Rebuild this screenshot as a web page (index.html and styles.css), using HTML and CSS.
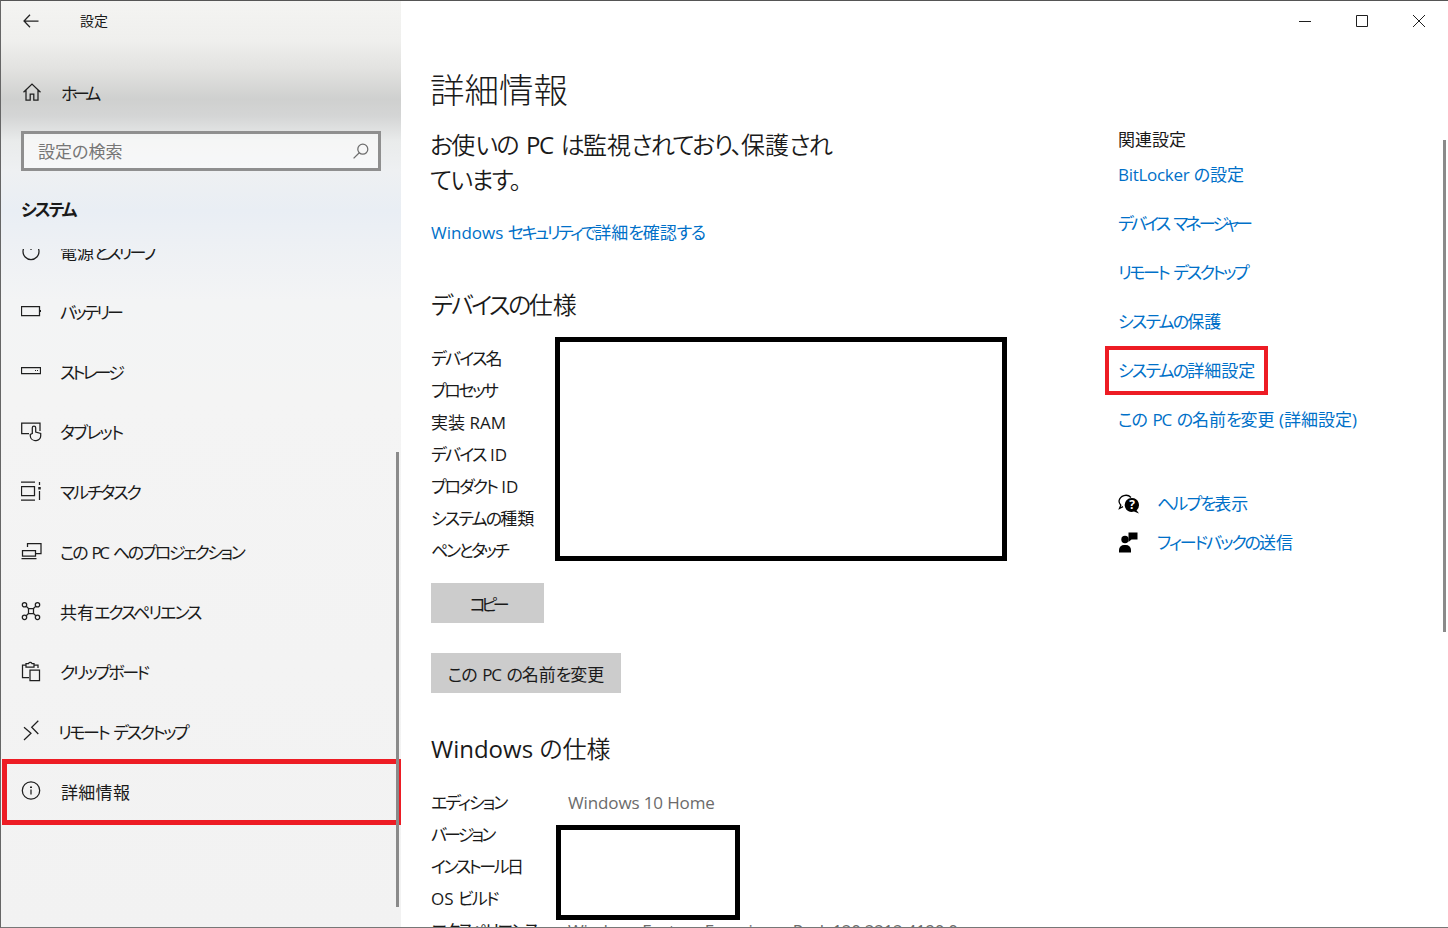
FILE: index.html
```html
<!DOCTYPE html>
<html lang="ja">
<head>
<meta charset="utf-8">
<title>設定</title>
<link rel="stylesheet" href="styles.css">
</head>
<body>
<div class="window">
  <aside class="sidebar">
    <div class="titlebar">
      <svg class="back" width="16" height="14" viewBox="0 0 16 14"><path d="M15.500 7H1M7 .8 1 7l6 6.200"/></svg>
      <span class="apptitle">設定</span>
    </div>
    <div class="home">
      <svg class="ico" width="20" height="20" viewBox="0 0 20 20"><path d="M1.500 10.200 10 2l8.500 8.200M4 8v10h4.200v-6h3.600v6H16V8"/></svg>
      <span class="k4">ホーム</span>
    </div>
    <div class="search"><span class="hint">設定の検索</span>
      <svg class="ico" width="16" height="16" viewBox="0 0 16 16"><circle cx="9.800" cy="6.200" r="5"/><path d="M6.300 9.700.6 15.400"/></svg>
    </div>
    <div class="group k2">システム</div>
    <nav class="nav">
      <div class="item"><svg class="ico" width="20" height="20" viewBox="0 0 20 20"><path d="M5 4.300a8 8 0 1 0 10 0M10 1v8"/></svg><span>電源<span class="k5">とスリープ</span></span></div>
      <div class="item"><svg class="ico" width="20" height="20" viewBox="0 0 20 20"><path d="M.5 5.500h18v9H.5zM19.500 9v2"/></svg><span class="k5">バッテリー</span></div>
      <div class="item"><svg class="ico" width="20" height="20" viewBox="0 0 20 20"><path d="M.5 6.500h19v6H.5z"/><path class="dots" d="M14 9.500h1M16 9.500h1"/></svg><span class="k5">ストレージ</span></div>
      <div class="item"><svg class="ico" width="22" height="22" viewBox="0 0 22 22"><path d="M8 13.500H.7V3.200H19V11"/><path d="M11.300 14V7.800a1.700 1.700 0 0 1 3.400 0V12l5 1.500V16a4.500 4.500 0 0 1-4.500 4.500H14A4.800 4.800 0 0 1 9.300 16v-1.500l2-1"/></svg><span class="k1">タブレット</span></div>
      <div class="item"><svg class="ico" width="22" height="20" viewBox="0 0 22 20"><path d="M0 1h14M0 19h14M.5 5.500h13v9H.5zM18.500 1v3M18.500 10v9"/><path class="dot" d="M18.500 6v2.500"/></svg><span class="k2">マルチタスク</span></div>
      <div class="item"><svg class="ico" width="21" height="18" viewBox="0 0 21 18"><path d="M6.500 5V1.500h13.500v10h-5M1.500 8.500h13V14h-13zM.500 16.500h15"/></svg><span class="k3">この PC へのプロジェクション</span></div>
      <div class="item"><svg class="ico" width="20" height="20" viewBox="0 0 20 20"><circle cx="3.500" cy="3.700" r="2.200"/><circle cx="16.500" cy="3.700" r="2.200"/><circle cx="3.500" cy="16.300" r="2.200"/><circle cx="16.500" cy="16.300" r="2.200"/><path d="M7.500 7.500h5v5h-5zM5.200 5.300l2.300 2.200M14.800 5.300l-2.300 2.200M5.200 14.700l2.300-2.200M14.800 14.700l-2.300-2.200"/></svg><span>共有<span class="k2">エクスペリエンス</span></span></div>
      <div class="item"><svg class="ico" width="20" height="22" viewBox="0 0 20 22"><path d="M8 17.500H1.500V5H5M13 5h4v3"/><path d="M5 7V3.500h2.500a2 2 0 0 1 3.500 0H13V7z"/><path d="M9 10h9.500v10.500H9z"/></svg><span class="k3">クリップボード</span></div>
      <div class="item"><svg class="ico" width="20" height="22" viewBox="0 0 20 22"><path d="M3 7.300 10 13.300 3 20M17.300.7 10.700 7.300 17.300 14"/></svg><span class="tight k3">リモート デスクトップ</span></div>
      <div class="item"><svg class="ico" width="20" height="20" viewBox="0 0 20 20"><circle cx="10" cy="9.500" r="8.700"/><path d="M10 8.500v5"/><path class="fat" d="M10 5.500v1.400"/></svg><span class="kj">詳細情報</span></div>
    </nav>
  </aside>

  <main class="main">
    <div class="caption">
      <svg width="14" height="14" viewBox="0 0 14 14"><path d="M1 7.500h12"/></svg>
      <svg width="14" height="14" viewBox="0 0 14 14"><path d="M1.500 1.500h11v11h-11z"/></svg>
      <svg width="14" height="14" viewBox="0 0 14 14"><path d="M1 1l12 12M13 1 1 13"/></svg>
    </div>
    <div class="columns">
      <section class="info">
        <h1>詳細情報</h1>
        <p class="status"><span class="hi">お</span>使<span class="hi">いの <span class="wl pc">PC</span> は</span>監視<span class="hi">されており、</span>保護<span class="hi">され</span><br><span class="hi">ています。</span></p>
        <a class="link seclink">Windows <span class="k3">セキュリティで</span>詳細<span class="hi">を</span>確認<span class="hi">する</span></a>
        <h2><span class="k1">デバイスの</span>仕様</h2>
        <dl class="specs">
          <dt><span class="k1">デバイス</span>名</dt>
          <dt class="k3">プロセッサ</dt>
          <dt>実装 RAM</dt>
          <dt><span class="k1">デバイス</span> ID</dt>
          <dt><span class="k2">プロダクト</span> ID</dt>
          <dt><span class="k1">システムの</span>種類</dt>
          <dt class="k3">ペンとタッチ</dt>
        </dl>
        <button class="btn copy"><span class="k6">コピー</span></button>
        <button class="btn rename"><span class="hi">この PC の</span>名前<span class="hi">を</span>変更</button>
        <h2 class="winhead"><span class="wl">Windows</span> の仕様</h2>
        <dl class="specs winspecs">
          <div class="row"><dt class="k2">エディション</dt><dd>Windows 10 Home</dd></div>
          <div class="row"><dt class="k5">バージョン</dt></div>
          <div class="row"><dt><span class="k3">インストール</span>日</dt></div>
          <div class="row"><dt>OS <span class="k1">ビルド</span></dt></div>
          <div class="row"><dt class="k2">エクスペリエンス</dt><dd class="packed">Windows Feature Experience Pack 120.2212.4190.0</dd></div>
        </dl>
      </section>
      <section class="related">
        <h3>関連設定</h3>
        <a class="link"><span class="latin">BitLocker</span> の設定</a>
        <a class="link k5">デバイス マネージャー</a>
        <a class="link k3">リモート デスクトップ</a>
        <a class="link"><span class="k1">システムの</span>保護</a>
        <a class="link"><span class="k1">システムの</span>詳細設定</a>
        <a class="link"><span class="hi">この PC の</span>名前<span class="hi">を</span>変更 (詳細設定)</a>
        <div class="help first">
          <svg width="22" height="20" viewBox="0 0 22 20"><path class="line" d="M13 3.500A7 7 0 0 0 1 7c0 1.700.7 3 1.800 4.200L1.500 14.500l3.500-1.800"/><path class="solid" d="M14 4a7 7 0 0 1 4.500 12.300L21 19.500l-5-1.900A7 7 0 1 1 14 4z"/><text x="14" y="15" class="q">?</text></svg>
          <a class="link"><span class="k1">ヘルプを</span>表示</a>
        </div>
        <div class="help">
          <svg width="22" height="22" viewBox="0 0 22 22"><circle class="solid" cx="7" cy="7.500" r="3.700"/><path class="solid" d="M1 20.500v-2.500A5 5 0 0 1 6 13h2a5 5 0 0 1 5 5v2.500z"/><path class="solid" d="M10.500.5h9v7h-6l-3 2.500z"/></svg>
          <a class="link"><span class="k2">フィードバックの</span>送信</a>
        </div>
      </section>
    </div>
  </main>
</div>

<div class="mark red-nav"></div>
<div class="mark red-link"></div>
<div class="mark black-device"></div>
<div class="mark black-win"></div>
<div class="thumb thumb-nav"></div>
<div class="thumb thumb-main"></div>
</body>
</html>
```
FILE: styles.css
```css
* { box-sizing: border-box; }
html, body { margin: 0; height: 100%; }
body {
  width: 1448px; height: 928px; overflow: hidden; position: relative;
  background: #fff; color: #1a1a1a;
  font-family: "Open Sans", "Noto Sans CJK JP", sans-serif;
  font-weight: 400;
  font-feature-settings: "palt";
}
.k1 { letter-spacing: -.105em; word-spacing: .2em; }
.k2 { letter-spacing: -.12em; word-spacing: .2em; }
.k3 { letter-spacing: -.145em; word-spacing: .2em; }
.k4 { letter-spacing: -.25em; }
.k5 { letter-spacing: -.17em; word-spacing: .2em; }
.k6 { letter-spacing: -.25em; }
.hi { letter-spacing: -.07em; word-spacing: .15em; }
.latin { letter-spacing: -.3px; }
.wl { font-weight: 400; letter-spacing: 0; }
.wl.pc { letter-spacing: -.06em; }
.window {
  display: flex; width: 1448px; height: 928px; overflow: hidden;
  border-top: 1px solid #555; border-left: 1px solid #666; border-bottom: 1px solid #777;
}
svg { fill: none; stroke: #1f1f1f; stroke-width: 1.250; flex: none; display: block; }

/* sidebar */
.sidebar {
  width: 400px; flex: none; display: flex; flex-direction: column;
  background:
    linear-gradient(180deg, #f4f4f2 0, #efefed 40px, #e2e2e0 68px, #cfd0cf 98px, #d4d5d5 115px, #e9ebeb 140px, #eef0f2 170px, #e9eef4 210px, #edf0f4 240px, #f3f4f5 300px, #f4f4f4 400px, #f2f2f2 928px);
}
.titlebar { height: 40px; display: flex; align-items: center; padding-left: 22px; flex: none; }
.apptitle { margin-left: 41px; font-size: 14px; line-height: 20px; }
.back { stroke: #222; }
.home { height: 44px; margin-top: 29px; display: flex; align-items: center; padding-left: 21px; gap: 19px; font-size: 17px; flex: none; }
.search {
  margin: 17px 20px 0 20px; height: 40px; border: 3px solid #8f8f8f; background: rgba(255,255,255,.55);
  display: flex; align-items: center; justify-content: space-between;
  padding: 0 9px 0 14px; color: #767676; font-size: 17px; flex: none;
}
.hint { margin-top: -2px; }
.search svg { stroke: #6d6d6d; }
.group { margin: 20px 0 0 20px; font-size: 17px; font-weight: 700; line-height: 38px; height: 38px; flex: none; }
.nav { flex: 1; overflow: hidden; margin-top: 20px; }
.item { height: 60px; display: flex; align-items: center; padding-left: 20px; font-size: 17px; position: relative; }
.item:first-child { margin-top: -28px; }
.item > span { position: absolute; left: 59px; }
.item > .tight { left: 57px; }
.item > .kj { left: 60px; letter-spacing: .3px; }
.dots { stroke-width: 1; }
.fat { stroke-width: 2; }
.dot { stroke-width: 2.500; }

/* main */
.main { flex: 1; display: flex; flex-direction: column; min-width: 0; }
.caption { height: 40px; display: flex; justify-content: flex-end; align-items: center; gap: 43px; padding-right: 22px; flex: none; }
.caption svg { stroke-width: 1; }
.columns { display: flex; padding-left: 30px; }
.info { width: 687px; flex: none; display: flex; flex-direction: column; align-items: flex-start; }
h1 { margin: 24px 0 0 -1px; font-size: 34.500px; font-weight: 300; line-height: 50px; }
.status { margin: 12px 0 0 -1px; font-size: 24px; line-height: 35px; font-weight: 350; word-spacing: -.05em; }
.link { color: #0070c8; font-size: 17px; line-height: 24px; display: block; }
.seclink { margin-top: 24px; }
h2 { margin: 42px 0 0; font-size: 24px; font-weight: 350; line-height: 36px; }
.specs { margin: 20px 0 0; font-size: 17px; line-height: 32px; }
dt, dd { margin: 0; }
.btn {
  display: block; border: 0; background: #cccccc; color: #1a1a1a; height: 40px; padding: 0 18px;
  font: inherit; font-size: 17px; font-feature-settings: "palt";
}
.copy { margin-top: 16px; width: 113px; }
.rename { margin-top: 30px; width: 190px; padding: 0; }
.winhead { margin-top: 38px; }
.winspecs { margin-top: 20px; }
.row { display: flex; height: 32px; white-space: nowrap; }
.row dt { width: 137px; flex: none; }
.row dd { color: #6b6b6b; letter-spacing: -.13px; }
.row .packed { letter-spacing: -.32px; }

.related { flex: 1; padding-top: 87px; }
h3 { margin: 0; font-size: 17px; font-weight: 400; line-height: 24px; }
.related .link { margin-bottom: 25px; }
.related h3 + .link { margin-top: 11px; }
.help { display: flex; align-items: center; gap: 17px; height: 24px; margin-top: 15px; }
.help.first { margin-top: 60px; }
.related .help .link { margin: 0; }
.solid { fill: #000; stroke: none; }
.line { stroke: #000; stroke-width: 1.300; }
.q { fill: #fff; stroke: none; font-size: 12px; font-weight: 700; text-anchor: middle; }

/* annotations laid over the screenshot */
.mark { position: absolute; }
.red-nav { left: 2px; top: 759px; width: 399px; height: 66px; border: 5px solid #ed1c24; }
.red-link { left: 1105px; top: 346px; width: 163px; height: 49px; border: 4px solid #ed1c24; }
.black-device { left: 555px; top: 337px; width: 452px; height: 224px; border: 5px solid #000; background: #fff; }
.black-win { left: 556px; top: 825px; width: 184px; height: 95px; border: 5px solid #000; background: #fff; }
.thumb { position: absolute; background: #8a8a8a; width: 3px; }
.thumb-nav { left: 396px; top: 452px; height: 455px; }
.thumb-main { left: 1443px; top: 140px; height: 492px; }
```
